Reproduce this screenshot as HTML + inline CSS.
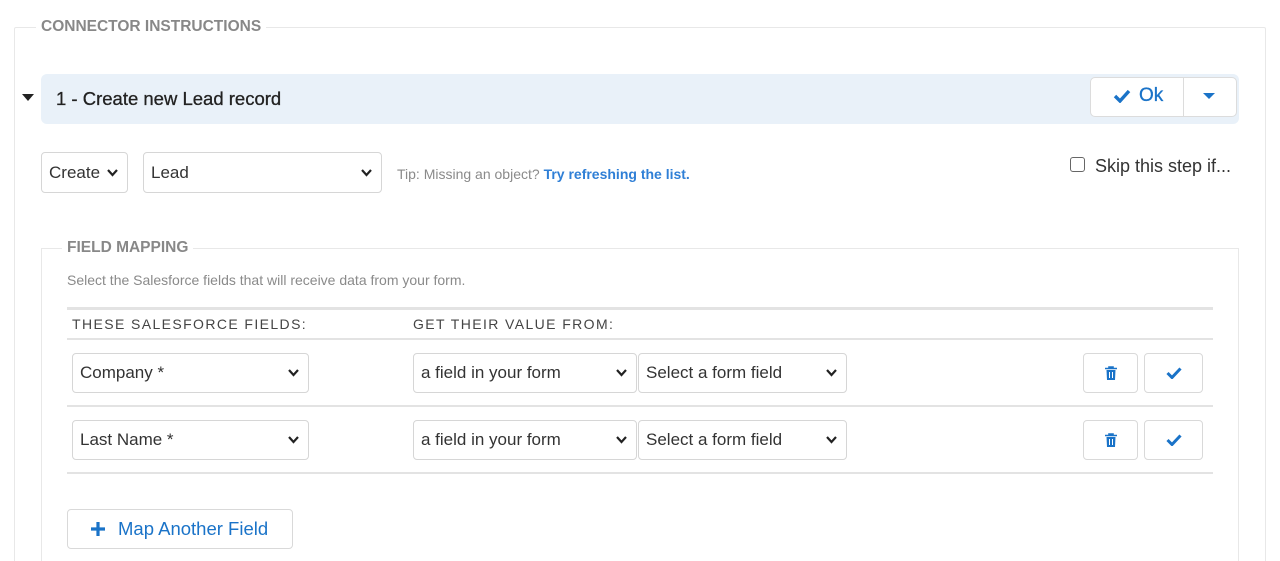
<!DOCTYPE html>
<html><head><meta charset="utf-8"><style>
*{box-sizing:border-box}
html,body{margin:0;width:1280px;height:561px;overflow:hidden}
body{background:#fff;font-family:"Liberation Sans",Arial,sans-serif;color:#333;position:relative}
.a{position:absolute}
.sel{position:absolute;border:1px solid #d6d6d6;border-radius:4px;background:#fff;font-size:17px;color:#333;padding-left:7px;display:flex;align-items:center}
.sel svg{position:absolute;right:9px;top:50%;margin-top:-4px}
.btn{position:absolute;border:1px solid #d9d9d9;border-radius:4px;background:#fff;display:flex;align-items:center;justify-content:center}
.hl{position:absolute;left:67px;width:1146px;height:2px;background:#e3e3e3}
</style></head><body>
<div class="a" style="left:14px;top:27px;width:1252px;height:560px;border:1px solid #e8e8e8;border-radius:2px"></div>
<div class="a" style="left:36px;top:17px;background:#fff;padding:0 5px;font-size:15.5px;font-weight:bold;color:#888;line-height:20px">CONNECTOR INSTRUCTIONS</div>

<svg class="a" style="left:22px;top:94px" width="12" height="8"><path d="M0 0H12L6 7Z" fill="#222"/></svg>
<div class="a" style="left:41px;top:74px;width:1198px;height:50px;background:#e9f1f9;border-radius:6px"></div>
<div class="a" style="left:56px;top:87px;font-size:18.5px;color:#222;line-height:24px;-webkit-text-stroke:0.3px #222">1 - Create new Lead record</div>
<div class="a" style="left:1090px;top:77px;width:147px;height:40px;border:1px solid #dcdcdc;border-radius:5px;background:#fff"></div>
<div class="a" style="left:1183px;top:77px;width:1px;height:40px;background:#dcdcdc"></div>
<svg class="a" style="left:1113px;top:89px" width="18" height="14"><path d="M2 7L7 12L16 2" stroke="#1a73c8" stroke-width="3.4" fill="none"/></svg>
<div class="a" style="left:1139px;top:85px;font-size:19px;color:#1a73c8;line-height:22px;-webkit-text-stroke:0.3px #1a73c8">Ok</div>
<svg class="a" style="left:1203px;top:93px" width="12" height="7"><path d="M0 0H12L6 6Z" fill="#1a73c8"/></svg>

<div class="sel" style="left:41px;top:152px;width:87px;height:41px">Create<svg width="11" height="8"><path d="M1 1L5.5 6L10 1" stroke="#222" stroke-width="2.2" fill="none"/></svg></div>
<div class="sel" style="left:143px;top:152px;width:239px;height:41px">Lead<svg width="11" height="8"><path d="M1 1L5.5 6L10 1" stroke="#222" stroke-width="2.2" fill="none"/></svg></div>
<div class="a" style="left:397px;top:165px;font-size:14px;color:#8a8a8a;line-height:18px">Tip: Missing an object? <span style="color:#2f7fd6;font-weight:bold">Try refreshing the list.</span></div>
<div class="a" style="left:1070px;top:157px;width:15px;height:15px;border:1px solid #666;border-radius:3px"></div>
<div class="a" style="left:1095px;top:155px;font-size:18px;color:#333;line-height:22px">Skip this step if...</div>

<div class="a" style="left:41px;top:248px;width:1198px;height:330px;border:1px solid #e8e8e8"></div>
<div class="a" style="left:62px;top:238px;background:#fff;padding:0 5px;font-size:15.5px;font-weight:bold;color:#888;line-height:20px">FIELD MAPPING</div>
<div class="a" style="left:67px;top:271px;font-size:14px;color:#8a8a8a;line-height:18px">Select the Salesforce fields that will receive data from your form.</div>
<div class="hl" style="top:307px;height:3px"></div>
<div class="a" style="left:72px;top:315px;font-size:14px;color:#444;letter-spacing:1.4px;line-height:18px">THESE SALESFORCE FIELDS:</div>
<div class="a" style="left:413px;top:315px;font-size:14px;color:#444;letter-spacing:1.4px;line-height:18px">GET THEIR VALUE FROM:</div>
<div class="hl" style="top:338px"></div>

<div class="sel" style="left:72px;top:353px;width:237px;height:40px">Company *<svg width="11" height="8"><path d="M1 1L5.5 6L10 1" stroke="#222" stroke-width="2.2" fill="none"/></svg></div>
<div class="sel" style="left:413px;top:353px;width:224px;height:40px">a field in your form<svg width="11" height="8"><path d="M1 1L5.5 6L10 1" stroke="#222" stroke-width="2.2" fill="none"/></svg></div>
<div class="sel" style="left:638px;top:353px;width:209px;height:40px">Select a form field<svg width="11" height="8"><path d="M1 1L5.5 6L10 1" stroke="#222" stroke-width="2.2" fill="none"/></svg></div>
<div class="btn" style="left:1083px;top:353px;width:55px;height:40px"><svg width="14" height="15"><path d="M1 2.5H13M5 2.5V1H9V2.5" stroke="#1a73c8" stroke-width="1.6" fill="none"/><path d="M2.5 4H11.5L11 14H3Z" fill="#1a73c8"/><path d="M5.5 6V12M8.5 6V12" stroke="#fff" stroke-width="1"/></svg></div>
<div class="btn" style="left:1144px;top:353px;width:59px;height:40px"><svg width="16" height="12"><path d="M1.5 6L6 10.5L14.5 1.5" stroke="#1a73c8" stroke-width="3" fill="none"/></svg></div>
<div class="hl" style="top:405px"></div>

<div class="sel" style="left:72px;top:420px;width:237px;height:40px">Last Name *<svg width="11" height="8"><path d="M1 1L5.5 6L10 1" stroke="#222" stroke-width="2.2" fill="none"/></svg></div>
<div class="sel" style="left:413px;top:420px;width:224px;height:40px">a field in your form<svg width="11" height="8"><path d="M1 1L5.5 6L10 1" stroke="#222" stroke-width="2.2" fill="none"/></svg></div>
<div class="sel" style="left:638px;top:420px;width:209px;height:40px">Select a form field<svg width="11" height="8"><path d="M1 1L5.5 6L10 1" stroke="#222" stroke-width="2.2" fill="none"/></svg></div>
<div class="btn" style="left:1083px;top:420px;width:55px;height:40px"><svg width="14" height="15"><path d="M1 2.5H13M5 2.5V1H9V2.5" stroke="#1a73c8" stroke-width="1.6" fill="none"/><path d="M2.5 4H11.5L11 14H3Z" fill="#1a73c8"/><path d="M5.5 6V12M8.5 6V12" stroke="#fff" stroke-width="1"/></svg></div>
<div class="btn" style="left:1144px;top:420px;width:59px;height:40px"><svg width="16" height="12"><path d="M1.5 6L6 10.5L14.5 1.5" stroke="#1a73c8" stroke-width="3" fill="none"/></svg></div>
<div class="hl" style="top:472px"></div>

<div class="btn" style="left:67px;top:509px;width:226px;height:40px;justify-content:flex-start;padding-left:23px"><svg width="14" height="14"><path d="M7 0V14M0 7H14" stroke="#1a73c8" stroke-width="3.2"/></svg><span style="margin-left:13px;font-size:18.5px;color:#1a73c8">Map Another Field</span></div>
</body></html>
